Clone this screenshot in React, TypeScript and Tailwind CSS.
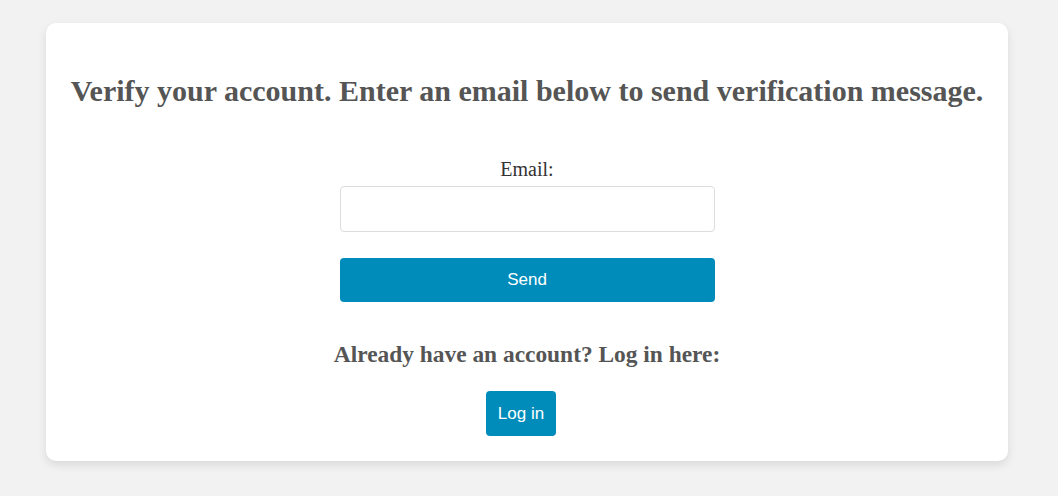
export default function App() {
  return (
    <div className="min-h-[496px] bg-[#f2f2f2] pt-[23px] pr-[50px] pb-[35px] pl-[46px] font-['Liberation_Serif',serif]">
      <div className="flex flex-col items-center rounded-[10px] bg-white px-5 pt-[50px] pb-[25px] shadow-[0_4px_10px_rgba(0,0,0,0.1)]">
        <h1 className="text-[30px] font-bold leading-[36px] text-[#555]">
          Verify your account. Enter an email below to send verification message.
        </h1>
        <form className="mt-[48px] flex w-[375px] flex-col items-center">
          <label htmlFor="email" className="text-[20px] leading-[24px] text-[#333]">
            Email:
          </label>
          <input
            id="email"
            type="email"
            className="mt-[5px] h-[46px] w-full rounded-[4px] border border-[#ddd] bg-white px-3 outline-none"
          />
          <button
            type="button"
            className="mt-[26px] h-[44px] w-full rounded-[4px] bg-[#008cba] font-['Liberation_Sans',sans-serif] text-[17px] text-white"
          >
            Send
          </button>
        </form>
        <h3 className="mt-[38px] text-[23.4px] font-bold leading-[28px] text-[#555]">
          Already have an account? Log in here:
        </h3>
        <button
          type="button"
          className="mt-[23px] mr-[12px] h-[45px] w-[70px] rounded-[4px] bg-[#008cba] font-['Liberation_Sans',sans-serif] text-[17px] text-white"
        >
          Log in
        </button>
      </div>
    </div>
  );
}
